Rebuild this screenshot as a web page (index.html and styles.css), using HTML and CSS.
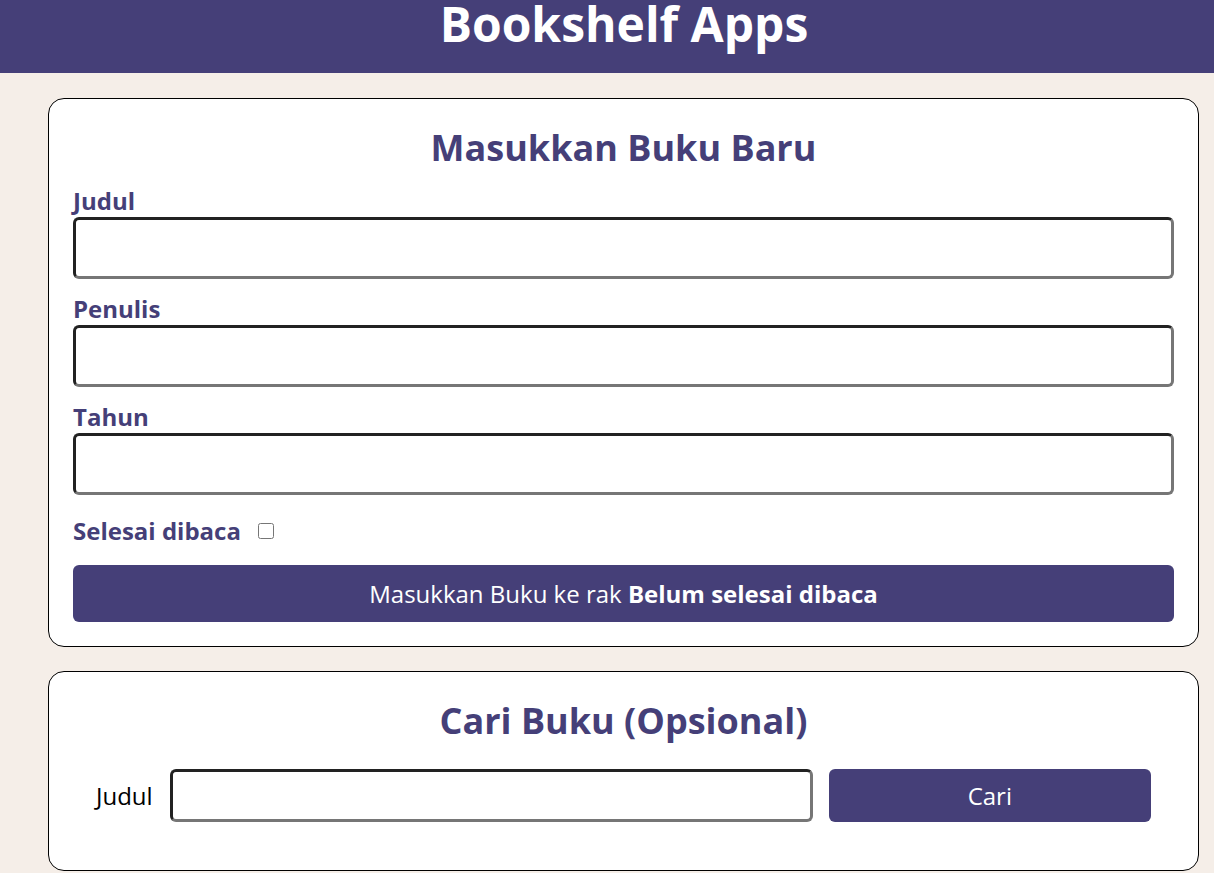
FILE: index.html
```html
<!DOCTYPE html>
<html lang="id">
<head>
<meta charset="utf-8">
<title>Bookshelf Apps</title>
<link rel="stylesheet" href="styles.css">
</head>
<body>
<header class="head-bar">
  <h1 class="head-title">Bookshelf Apps</h1>
</header>
<main class="main">
  <section class="card">
    <h2 class="card-title">Masukkan Buku Baru</h2>
    <form class="book-form">
      <div class="field">
        <label class="field-label" for="judul">Judul</label>
        <input class="text-input" id="judul" type="text">
      </div>
      <div class="field">
        <label class="field-label" for="penulis">Penulis</label>
        <input class="text-input" id="penulis" type="text">
      </div>
      <div class="field">
        <label class="field-label" for="tahun">Tahun</label>
        <input class="text-input" id="tahun" type="number">
      </div>
      <div class="check-row">
        <label class="field-label" for="selesai">Selesai dibaca</label>
        <input class="check" id="selesai" type="checkbox">
      </div>
      <button class="btn btn-submit" type="button">Masukkan Buku ke rak <b>Belum selesai dibaca</b></button>
    </form>
  </section>
  <section class="card">
    <h2 class="card-title">Cari Buku (Opsional)</h2>
    <form class="search-form">
      <label class="search-label" for="cari">Judul</label>
      <input class="text-input search-input" id="cari" type="text">
      <button class="btn btn-search" type="button">Cari</button>
    </form>
  </section>
</main>
</body>
</html>
```

FILE: styles.css
```css
* { box-sizing: border-box; }
body {
  margin: 0;
  background: #f5eee8;
  font-family: "Open Sans", "Noto Sans", sans-serif;
  color: #000;
}
.head-bar {
  background: #453f78;
  height: 73px;
  padding-left: 34px;
}
.head-title {
  margin: 0;
  color: #fff;
  font-size: 48px;
  line-height: 48px;
  font-weight: 700;
  text-align: center;
}
.main {
  padding: 25px 15px 0 48px;
  display: flex;
  flex-direction: column;
  gap: 24px;
}
.card {
  background: #fff;
  border: 1px solid #000;
  border-radius: 16px;
  padding: 24px;
}
.card-title {
  margin: 0;
  color: #453f78;
  font-size: 36px;
  line-height: 49px;
  font-weight: 700;
  text-align: center;
}
.book-form {
  display: flex;
  flex-direction: column;
  margin-top: 12px;
}
.field {
  display: flex;
  flex-direction: column;
  margin-bottom: 13px;
}
.field-label {
  color: #453f78;
  font-size: 24px;
  line-height: 33px;
  font-weight: 700;
}
.text-input {
  height: 62px;
  border-style: solid;
  border-width: 3px;
  border-top-color: #222;
  border-left-color: #222;
  border-right-color: #767676;
  border-bottom-color: #767676;
  border-radius: 6px;
  background: #fff;
  font-family: inherit;
  font-size: 22px;
  padding: 4px 8px;
}
.check-row {
  display: flex;
  align-items: center;
  gap: 17px;
  margin-top: 6px;
  margin-bottom: 18px;
}
.check {
  width: 16px;
  height: 16px;
  margin: 0;
}
.btn {
  background: #453f78;
  color: #fff;
  border: none;
  border-radius: 6px;
  font-family: inherit;
  font-size: 24px;
  cursor: pointer;
}
.btn-submit {
  height: 57px;
}
.search-form {
  display: flex;
  align-items: center;
  gap: 16px;
  margin: 24px 23px 24px;
}
.search-label {
  font-size: 24px;
  margin-right: 1px;
}
.search-input {
  height: 53px;
  flex: 0 0 643px;
}
.btn-search {
  height: 53px;
  flex: 1;
}
```
